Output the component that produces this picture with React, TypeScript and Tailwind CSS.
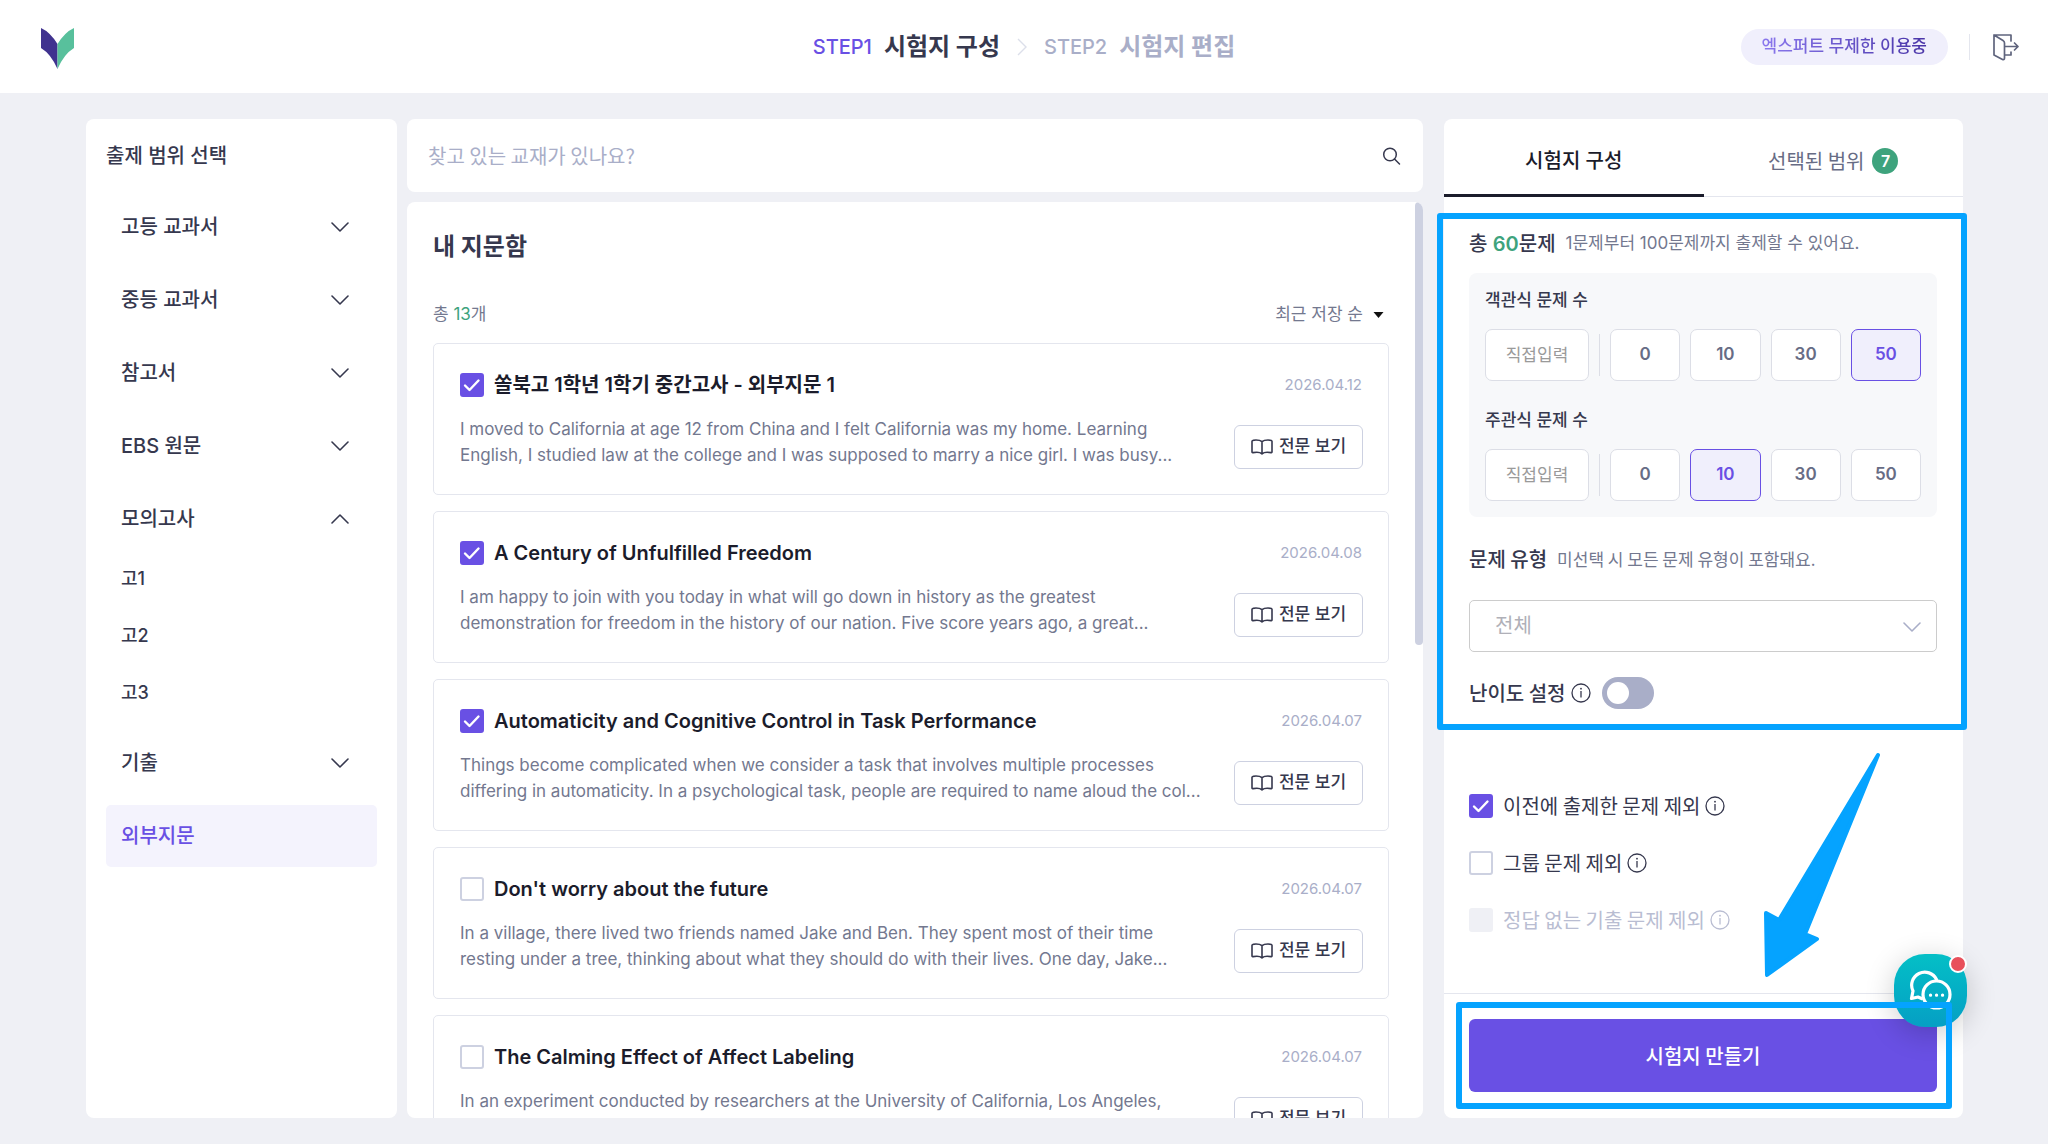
import { useState, type ReactNode } from 'react';

const categories: { label: string; children?: string[]; active?: boolean }[] = [
  { label: '고등 교과서' },
  { label: '중등 교과서' },
  { label: '참고서' },
  { label: 'EBS 원문' },
  { label: '모의고사', children: ['고1', '고2', '고3'] },
  { label: '기출' },
  { label: '외부지문', active: true },
];

const passages = [
  {
    title: '쏠북고 1학년 1학기 중간고사 - 외부지문 1',
    date: '2026.04.12',
    lines: [
      'I moved to California at age 12 from China and I felt California was my home. Learning',
      'English, I studied law at the college and I was supposed to marry a nice girl. I was busy...',
    ],
    checked: true,
  },
  {
    title: 'A Century of Unfulfilled Freedom',
    date: '2026.04.08',
    lines: [
      'I am happy to join with you today in what will go down in history as the greatest',
      'demonstration for freedom in the history of our nation. Five score years ago, a great...',
    ],
    checked: true,
  },
  {
    title: 'Automaticity and Cognitive Control in Task Performance',
    date: '2026.04.07',
    lines: [
      'Things become complicated when we consider a task that involves multiple processes',
      'differing in automaticity. In a psychological task, people are required to name aloud the col...',
    ],
    checked: true,
  },
  {
    title: "Don't worry about the future",
    date: '2026.04.07',
    lines: [
      'In a village, there lived two friends named Jake and Ben. They spent most of their time',
      'resting under a tree, thinking about what they should do with their lives. One day, Jake...',
    ],
    checked: false,
  },
  {
    title: 'The Calming Effect of Affect Labeling',
    date: '2026.04.07',
    lines: [
      'In an experiment conducted by researchers at the University of California, Los Angeles,',
      'participants were shown pictures of faces while their brain activity was measured...',
    ],
    checked: false,
  },
];

const counts = [0, 10, 30, 50];

function Chevron({ className }: { className: string }) {
  return (
    <svg viewBox="0 0 18 10" className={`h-[10px] w-[18px] shrink-0 ${className}`} fill="none" stroke="currentColor" strokeWidth="1.6" strokeLinecap="round" strokeLinejoin="round">
      <path d="M1 1l8 8 8-8" />
    </svg>
  );
}

function InfoIcon() {
  return (
    <svg viewBox="0 0 20 20" className="h-5 w-5 shrink-0" fill="none" stroke="currentColor" strokeWidth="1.3">
      <circle cx="10" cy="10" r="9" />
      <path d="M10 8v6.500" />
      <circle cx="10" cy="5.7" r="0.9" fill="currentColor" stroke="none" />
    </svg>
  );
}

function BookIcon() {
  return (
    <svg viewBox="0 0 22 16" className="h-4 w-[22px]" fill="none" stroke="currentColor" strokeWidth="1.6" strokeLinejoin="round">
      <path d="M11 2.6C9.6 1.4 7.5 1 5 1 3.4 1 1 1.2 1 2.2V13c0 .6.5.7 1 .6C5 13 9 13 11 14.8c2-1.8 6-1.8 9-1.2.5.1 1 0 1-.6V2.2C21 1.2 18.6 1 17 1c-2.5 0-4.6.4-6 1.6zM11 2.6v12" />
    </svg>
  );
}

interface CheckBoxProps {
  id: string;
  checked: boolean;
  disabled?: boolean;
  onChange?: () => void;
}

function CheckBox({ id, checked, disabled, onChange }: CheckBoxProps) {
  return (
    <span className="relative flex h-6 w-6 shrink-0">
      <input
        id={id}
        type="checkbox"
        checked={checked}
        disabled={disabled}
        onChange={onChange}
        className="h-6 w-6 appearance-none rounded-[3px] border-2 border-[#cdd1e1] bg-white checked:border-[#6950e4] checked:bg-[#6950e4] disabled:border-[#eff0f5] disabled:bg-[#eff0f5]"
      />
      {checked && (
        <svg viewBox="0 0 24 24" className="pointer-events-none absolute inset-0" fill="none" stroke="white" strokeWidth="2.4" strokeLinecap="round" strokeLinejoin="round">
          <path d="M5 12.5l4.5 4.5 9-9.5" />
        </svg>
      )}
    </span>
  );
}

function Header() {
  return (
    <header className="grid h-[93px] grid-cols-[1fr_auto_1fr] items-center bg-white px-[27px]">
      <a href="#" aria-label="홈" className="ml-[14px] w-[33px]">
        <svg viewBox="0 0 33 42" className="mt-1 h-[42px] w-[33px]">
          <path d="M0 0Q9 4 16.5 16V41Q10 26 0 20Z" fill="#40328f" />
          <path d="M33 0Q24 4 16.5 16V41Q23 26 33 20Z" fill="#58c09c" />
        </svg>
      </a>
      <ol className="flex items-center">
        <li className="flex items-center gap-3">
          <span className="text-[20px] font-medium text-[#6950e4]">STEP1</span>
          <h1 className="text-[24px] font-bold text-[#36384e]">시험지 구성</h1>
        </li>
        <li className="mx-[17px]" aria-hidden>
          <svg viewBox="0 0 10 18" className="h-[18px] w-[10px]" fill="none" stroke="#dcdfea" strokeWidth="1.4">
            <path d="M1 1l8 8-8 8" />
          </svg>
        </li>
        <li className="flex items-center gap-3 text-[#a9aec8]">
          <span className="text-[20px] font-medium">STEP2</span>
          <span className="text-[24px] font-bold">시험지 편집</span>
        </li>
      </ol>
      <div className="flex items-center justify-end">
        <p className="flex h-9 items-center rounded-full bg-[#f0effc] px-[21px] text-[17px] font-medium">
          <span className="bg-linear-to-r from-[#8b78ee] to-[#4a35a8] bg-clip-text text-transparent">엑스퍼트 무제한 이용중</span>
        </p>
        <span className="mx-[21px] h-[26px] w-px bg-[#e4e6ee]" />
        <button type="button" aria-label="나가기">
          <svg viewBox="0 0 30 30" className="h-[30px] w-[30px]" fill="none" stroke="#5f647d" strokeWidth="1.7" strokeLinecap="round" strokeLinejoin="round">
            <path d="M3 3h17v6M20 20v3h-6M3 3v20l8.5 4.500c1.500.6 2-.2 2-1.500V11c0-1.500-.5-2-1.500-2.600L3 3zM14 14.500h13M23.500 11l3.500 3.500-3.500 3.500" />
          </svg>
        </button>
      </div>
    </header>
  );
}

function Sidebar() {
  return (
    <aside className="rounded-lg bg-white px-5 pt-[22px]">
      <h2 className="flex h-[30px] items-center text-[20px] font-medium text-[#36384e]">출제 범위 선택</h2>
      <nav className="mt-[25px] flex flex-col gap-[11px] font-medium text-[#36384e]">
        {categories.map(({ label, children, active }) => (
          <div key={label}>
            <button
              type="button"
              className={`flex h-[62px] w-full items-center justify-between rounded-[5px] pr-7 pl-[15px] text-[20px] ${active ? 'bg-[#f4f3fd] text-[#6950e4]' : ''}`}
            >
              {label}
              {!active && <Chevron className={children ? 'rotate-180' : ''} />}
            </button>
            {children?.map(child => (
              <button key={child} type="button" className="flex h-[57px] w-full items-center pl-[15px] text-[18px]">
                {child}
              </button>
            ))}
          </div>
        ))}
      </nav>
    </aside>
  );
}

function PassageList() {
  const [checked, setChecked] = useState(passages.map(p => p.checked));
  const toggle = (index: number) => setChecked(prev => prev.map((c, i) => (i === index ? !c : c)));

  return (
    <main className="mr-[21px] ml-[10px] flex min-h-0 min-w-0 flex-col gap-[10px]">
      <div className="flex h-[73px] shrink-0 items-center rounded-lg bg-white pr-[22px] pl-[21px]">
        <input
          type="search"
          aria-label="교재 검색"
          placeholder="찾고 있는 교재가 있나요?"
          className="min-w-0 flex-1 font-['Noto_Sans_CJK_KR',sans-serif] text-[20px] outline-none placeholder:text-[#a9aec8]"
        />
        <button type="button" aria-label="검색">
          <svg viewBox="0 0 20 20" className="h-5 w-5" fill="none" stroke="#36384e" strokeWidth="1.5" strokeLinecap="round">
            <circle cx="9" cy="8.500" r="6.300" />
            <path d="M13.500 13l5 5" />
          </svg>
        </button>
      </div>

      <div className="flex min-h-0 flex-1 overflow-hidden rounded-lg bg-white">
        <div className="min-w-0 flex-1 px-[26px] pt-[29px]">
          <h2 className="text-[24px] leading-8 font-bold text-[#36384e]">내 지문함</h2>
          <div className="mt-9 flex h-8 items-center justify-between text-[17px] text-[#73788f]">
            <p>
              총 <span className="text-[#3ea37d]">13</span>개
            </p>
            <button type="button" className="flex items-center gap-[10px] pr-[5px]">
              최근 저장 순
              <svg viewBox="0 0 10 6" className="h-[6px] w-[11px]">
                <path d="M0 0h10L5 6z" fill="#111" />
              </svg>
            </button>
          </div>
          <ul className="mt-3 flex flex-col gap-4">
            {passages.map((p, i) => (
              <li key={p.title} className="flex h-[152px] shrink-0 flex-col rounded-[5px] border border-[#e4e6ee] pt-[25px] pr-[25px] pl-[26px]">
                <div className="flex h-8 items-center">
                  <CheckBox id={`passage-${i}`} checked={checked[i]} onChange={() => toggle(i)} />
                  <label htmlFor={`passage-${i}`} className="ml-[10px] flex-1 text-[20px] font-semibold text-[#1b1c2b]">
                    {p.title}
                  </label>
                  <time className="mr-px text-[15px] text-[#a9aec8]">{p.date}</time>
                </div>
                <div className="mt-[15px] flex items-start justify-between">
                  <p className="text-[17px] leading-[26px] whitespace-nowrap text-[#73788f]">
                    {p.lines[0]}
                    <br />
                    {p.lines[1]}
                  </p>
                  <button type="button" className="mt-[9px] flex h-[44px] w-[129px] items-center justify-center gap-[6px] rounded-[6px] border border-[#cdd1e1] text-[17px] font-medium text-[#36384e]">
                    <BookIcon />
                    전문 보기
                  </button>
                </div>
              </li>
            ))}
          </ul>
        </div>
        <div className="w-2 shrink-0">
          <div className="h-[443px] rounded-full bg-[#cdd1e1]" />
        </div>
      </div>
    </main>
  );
}

interface CountPickerProps {
  id: string;
  label: string;
  value: number;
  onChange: (value: number) => void;
}

function CountPicker({ id, label, value, onChange }: CountPickerProps) {
  return (
    <div>
      <label htmlFor={id} className="flex h-6 items-center text-[17px] font-medium text-[#36384e]">
        {label}
      </label>
      <div className="mt-4 flex items-center gap-[10px]">
        <input
          id={id}
          placeholder="직접입력"
          className="h-[52px] w-[104px] rounded-[7px] border border-[#dcdee6] bg-white text-center text-[17px] placeholder:text-[#9a9a9a]"
        />
        <span className="h-[42px] w-px bg-[#dcdee6]" />
        {counts.map(count => (
          <button
            key={count}
            type="button"
            aria-pressed={count === value}
            onClick={() => onChange(count)}
            className={`h-[52px] flex-1 rounded-[7px] border text-[17px] font-semibold ${
              count === value ? 'border-[#6950e4] bg-[#f0effc] text-[#6950e4]' : 'border-[#dcdee6] bg-white text-[#676c85]'
            }`}
          >
            {count}
          </button>
        ))}
      </div>
    </div>
  );
}

interface ExcludeOptionProps {
  id: string;
  checked: boolean;
  disabled?: boolean;
  onChange?: () => void;
  children: ReactNode;
}

function ExcludeOption({ id, checked, disabled, onChange, children }: ExcludeOptionProps) {
  return (
    <div className={`flex h-[57px] items-center ${disabled ? 'text-[#b9bdd2]' : 'text-[#36384e]'}`}>
      <CheckBox id={id} checked={checked} disabled={disabled} onChange={onChange} />
      <label htmlFor={id} className="mr-[5px] ml-[10px] font-['Noto_Sans_CJK_KR',sans-serif] text-[20px]">
        {children}
      </label>
      <InfoIcon />
    </div>
  );
}

function SettingsPanel() {
  const [choice, setChoice] = useState(50);
  const [written, setWritten] = useState(10);
  const [difficulty, setDifficulty] = useState(false);
  const [excludeUsed, setExcludeUsed] = useState(true);
  const [excludeGroup, setExcludeGroup] = useState(false);

  return (
    <section className="relative flex flex-col rounded-lg bg-white">
      <div role="tablist" className="flex h-[78px] shrink-0 border-b border-[#e4e6ee] text-[20px]">
        <button type="button" role="tab" aria-selected className="-mb-px flex-1 border-b-[3px] border-[#1b1c2b] pt-2 font-medium text-[#1b1c2b]">
          시험지 구성
        </button>
        <button type="button" role="tab" aria-selected={false} className="-mb-px flex flex-1 items-center justify-center gap-2 border-b-[3px] border-transparent pt-2 font-['Noto_Sans_CJK_KR',sans-serif] text-[#676c85]">
          선택된 범위
          <span className="flex h-[26px] w-[26px] items-center justify-center rounded-full bg-[#3ea37d] font-[Inter,sans-serif] text-[16px] font-semibold text-white">7</span>
        </button>
      </div>

      <div className="flex flex-1 flex-col pt-8 pr-[26px] pl-[25px]">
        <div className="flex h-[30px] items-center gap-[10px]">
          <h2 className="text-[20px] font-medium text-[#36384e]">
            총 <span className="font-semibold text-[#3ea37d]">{choice + written}</span>문제
          </h2>
          <p className="text-[17px] text-[#73788f]">1문제부터 100문제까지 출제할 수 있어요.</p>
        </div>
        <div className="mt-[14px] flex flex-col gap-7 rounded-lg bg-[#f7f8fa] px-4 py-4">
          <CountPicker id="choice" label="객관식 문제 수" value={choice} onChange={setChoice} />
          <CountPicker id="written" label="주관식 문제 수" value={written} onChange={setWritten} />
        </div>

        <div className="mt-[27px] flex h-[30px] items-center gap-[10px]">
          <label htmlFor="type" className="font-['Noto_Sans_CJK_KR',sans-serif] text-[20px] font-medium text-[#36384e]">
            문제 유형
          </label>
          <p className="font-['Noto_Sans_CJK_KR',sans-serif] text-[17px] text-[#73788f]">미선택 시 모든 문제 유형이 포함돼요.</p>
        </div>
        <div className="relative mt-[26px]">
          <select id="type" className="h-[52px] w-full appearance-none rounded-[5px] border border-[#cccccc] bg-white px-[25px] text-[20px] text-[#b0b0b8]">
            <option>전체</option>
          </select>
          <Chevron className="pointer-events-none absolute top-[22px] right-4 text-[#a9aec8]" />
        </div>

        <div className="mt-[25px] flex h-8 items-center text-[#36384e]">
          <label htmlFor="difficulty" className="mr-[5px] font-['Noto_Sans_CJK_KR',sans-serif] text-[20px] font-medium">
            난이도 설정
          </label>
          <InfoIcon />
          <span className="relative ml-[11px] flex">
            <input
              id="difficulty"
              type="checkbox"
              role="switch"
              checked={difficulty}
              onChange={() => setDifficulty(!difficulty)}
              className="h-8 w-[52px] appearance-none rounded-full bg-[#a9aec8] checked:bg-[#6950e4]"
            />
            <span className={`pointer-events-none absolute top-[5px] h-[22px] w-[22px] rounded-full bg-white ${difficulty ? 'right-[5px]' : 'left-[5px]'}`} />
          </span>
        </div>

        <div className="mt-[68px]">
          <ExcludeOption id="exclude-used" checked={excludeUsed} onChange={() => setExcludeUsed(!excludeUsed)}>
            이전에 출제한 문제 제외
          </ExcludeOption>
          <ExcludeOption id="exclude-group" checked={excludeGroup} onChange={() => setExcludeGroup(!excludeGroup)}>
            그룹 문제 제외
          </ExcludeOption>
          <ExcludeOption id="exclude-no-answer" checked={false} disabled>
            정답 없는 기출 문제 제외
          </ExcludeOption>
        </div>
      </div>

      <div className="border-t border-[#e4e6ee] pt-[25px] pr-[26px] pb-[26px] pl-[25px]">
        <button type="button" className="h-[73px] w-full rounded-[6px] bg-[#6950e4] font-['Noto_Sans_CJK_KR',sans-serif] text-[20px] font-medium text-white">
          시험지 만들기
        </button>
      </div>

      <ChatButton />

      {/* guide marks drawn over the panel */}
      <div className="pointer-events-none absolute top-[94px] -right-1 -left-[7px] h-[517px] rounded-[3px] border-[6px] border-[#05a3ff]" />
      <div className="pointer-events-none absolute right-[11px] bottom-[9px] left-3 h-[107px] rounded-[3px] border-[6px] border-[#05a3ff]" />
      <svg viewBox="0 0 118 230" className="pointer-events-none absolute right-[82px] bottom-[138px] h-[230px] w-[118px]">
        <path d="M115 5L42 184l12 5L4 225 3 163l13 7z" fill="#05a3ff" stroke="#05a3ff" strokeWidth="4" strokeLinejoin="round" />
      </svg>
    </section>
  );
}

function ChatButton() {
  return (
    <button
      type="button"
      aria-label="채팅 상담"
      className="absolute -right-1 bottom-[91px] flex h-[73px] w-[73px] items-center justify-center rounded-[31px] bg-linear-to-b from-[#05bfc6] to-[#069fc4] shadow-[0_6px_30px_rgba(0,0,0,0.2)]"
    >
      <svg viewBox="0 0 44 44" className="h-11 w-11" fill="none" stroke="white" strokeWidth="3.2" strokeLinecap="round" strokeLinejoin="round">
        <path d="M27.5 10.5A13 13 0 1 0 4 22L2.500 29.500 9 28 12.500 29.500" />
        <circle cx="27.5" cy="25.5" r="13.500" />
        <path d="M21.500 26.200h.1M27.500 26.200h.1M33.500 26.200h.1" />
      </svg>
      <span className="absolute top-px right-0 h-[18px] w-[18px] rounded-full border-2 border-white bg-[#e8505b]" />
    </button>
  );
}

export default function App() {
  return (
    <div className="flex h-screen flex-col bg-[#eff0f5] font-[Inter,'Noto_Sans_CJK_KR',sans-serif]">
      <Header />
      <div className="grid min-h-0 flex-1 grid-cols-[311px_minmax(0,1fr)_519px] py-[26px] pr-[85px] pl-[86px]">
        <Sidebar />
        <PassageList />
        <SettingsPanel />
      </div>
    </div>
  );
}
